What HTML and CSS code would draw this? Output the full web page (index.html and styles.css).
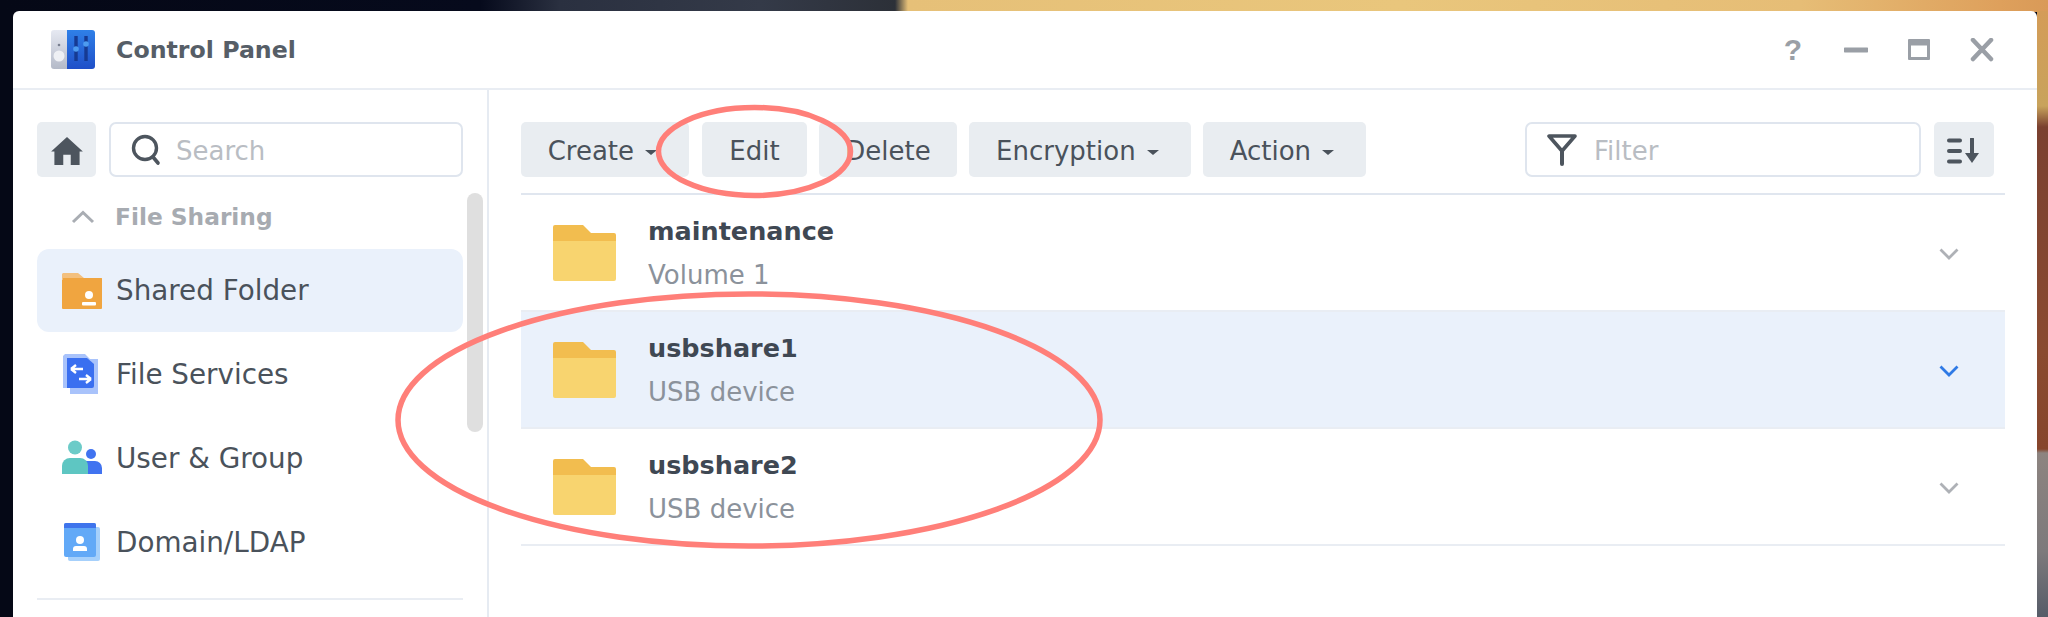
FILE: index.html
```html
<!DOCTYPE html>
<html lang="en">
<head>
    <meta charset="UTF-8">
    <title>Control Panel</title>
    <link rel="stylesheet" href="styles.css">
</head>
<body>
    <div class="window">
        <header class="titlebar">
            <svg class="app-icon" width="44" height="40" viewBox="0 0 44 40">
                <defs>
                    <linearGradient id="cpBlue" x1="0" y1="0" x2="0" y2="1"><stop offset="0" stop-color="#2f80e8"/><stop offset="1" stop-color="#1f4fc8"/></linearGradient>
                    <linearGradient id="cpGrey" x1="0" y1="0" x2="0" y2="1"><stop offset="0" stop-color="#e6e9f2"/><stop offset="1" stop-color="#b4bac8"/></linearGradient>
                </defs>
                <path d="M3 0h14v39H3a3 3 0 0 1-3-3V3a3 3 0 0 1 3-3z" fill="url(#cpGrey)"/>
                <path d="M16 0h25a3 3 0 0 1 3 3v33a3 3 0 0 1-3 3H16z" fill="url(#cpBlue)"/>
                <circle cx="8" cy="15" r="1.300" fill="#7a8090"/>
                <circle cx="8" cy="26" r="5.500" fill="#eef0f4"/>
                <path d="M25 6v25M35 6v25" stroke="#163a92" stroke-width="3.400"/>
                <circle cx="25" cy="19" r="2.800" fill="#4d9bef"/>
                <circle cx="35" cy="14" r="2.800" fill="#4d9bef"/>
            </svg>
            <h1 class="app-title">Control Panel</h1>
            <div class="win-controls">
                <span class="win-help">?</span>
                <svg width="24" height="24" viewBox="0 0 24 24"><path d="M1 12h22" stroke="#9a9fa6" stroke-width="5" stroke-linecap="round"/></svg>
                <svg width="24" height="24" viewBox="0 0 24 24"><path fill-rule="evenodd" d="M2 1h20a1 1 0 0 1 1 1v19a1 1 0 0 1-1 1H2a1 1 0 0 1-1-1V2a1 1 0 0 1 1-1zm2 6.500V19h16V7.500z" fill="#9a9fa6"/></svg>
                <svg width="24" height="24" viewBox="0 0 24 24"><path d="M3 2l18 19M21 2L3 21" stroke="#9a9fa6" stroke-width="4.500" stroke-linecap="round"/></svg>
            </div>
        </header>

        <div class="panel">
            <aside class="sidebar">
                <div class="side-top">
                    <button class="btn icon-btn home-btn">
                        <svg width="32" height="28" viewBox="0 0 34 30"><path fill-rule="evenodd" d="M17 0l17 15.500h-3.500V30h-27V15.500H0zM13 19v11h8V19z" fill="#4d555e"/></svg>
                    </button>
                    <div class="field search">
                        <svg width="30" height="32" viewBox="0 0 30 32"><circle cx="14" cy="14" r="11.500" fill="none" stroke="#4d555e" stroke-width="3.400"/><path d="M22 23l5 6" stroke="#4d555e" stroke-width="3.600" stroke-linecap="round"/></svg>
                        <span>Search</span>
                    </div>
                </div>
                <div class="side-scroll">
                    <div class="side-list">
                        <div class="side-group">
                            <svg width="24" height="14" viewBox="0 0 24 14"><path d="M2 12L12 2.500 22 12" fill="none" stroke="#a9adb3" stroke-width="3"/></svg>
                            <span>File Sharing</span>
                        </div>
                        <div class="side-item selected">
                            <svg width="40" height="36" viewBox="0 0 40 36"><path d="M1 0h15l6 5h18v8H0V1z" fill="#f3c07e"/><rect y="5" width="40" height="31" rx="1" fill="#f0a540"/><path d="M0 3h1v4H0z" fill="#f3c07e"/><circle cx="27" cy="22" r="4" fill="#fff"/><rect x="20" y="29" width="14" height="3.500" rx="1" fill="#fff"/></svg>
                            <span>Shared Folder</span>
                        </div>
                        <div class="side-item">
                            <svg width="40" height="40" viewBox="0 0 40 40"><path d="M3 0h20l5 5h8v35H8v-6H1V2z" fill="#a9c3fb"/><path d="M5 4h20l7 6v22a2 2 0 0 1-2 2H5z" fill="#3a6ff0"/><path d="M21 15H9M9 15l5-4M9 15l5 4M17 25h12M29 25l-5-4M29 25l-5 4" fill="none" stroke="#fff" stroke-width="2.400"/></svg>
                            <span>File Services</span>
                        </div>
                        <div class="side-item">
                            <svg width="40" height="36" viewBox="0 0 40 36"><circle cx="29" cy="14" r="5" fill="#4173f0"/><path d="M18 34v-6a7 7 0 0 1 7-7h8a7 7 0 0 1 7 7v6z" fill="#4173f0"/><circle cx="13" cy="7.500" r="7" fill="#6ccbc8"/><path d="M0 34v-8a8 8 0 0 1 8-8h10a8 8 0 0 1 8 8v8z" fill="#5ec6c2"/></svg>
                            <span>User &amp; Group</span>
                        </div>
                        <div class="side-item">
                            <svg width="36" height="38" viewBox="0 0 36 38"><rect x="4" y="4" width="32" height="34" rx="2" fill="#a6d0fb"/><rect width="32" height="34" rx="2" fill="#62a9f7"/><path d="M2 0h28a2 2 0 0 1 2 2v3H0V2a2 2 0 0 1 2-2z" fill="#3f74ec"/><circle cx="16" cy="17" r="4" fill="#fff"/><path d="M9 28v-2a3 3 0 0 1 3-3h8a3 3 0 0 1 3 3v2z" fill="#fff"/></svg>
                            <span>Domain/LDAP</span>
                        </div>
                    </div>
                    <div class="scrollbar"></div>
                </div>
                <div class="side-rule"></div>
            </aside>

            <main class="content">
                <div class="toolbar">
                    <button class="btn btn-menu btn-create">Create <i class="caret"></i></button>
                    <button class="btn btn-edit">Edit</button>
                    <button class="btn btn-delete">Delete</button>
                    <button class="btn btn-menu btn-encrypt">Encryption <i class="caret"></i></button>
                    <button class="btn btn-menu btn-action">Action <i class="caret"></i></button>
                    <div class="field filter">
                        <svg width="30" height="32" viewBox="0 0 30 32"><path d="M2 2h26L15 17z" fill="none" stroke="#4d555e" stroke-width="3.600" stroke-linejoin="round"/><path d="M15 16v14" stroke="#4d555e" stroke-width="4" stroke-linecap="round"/></svg>
                        <span>Filter</span>
                    </div>
                    <button class="btn icon-btn sort-btn">
                        <svg width="34" height="26" viewBox="0 0 34 26"><path d="M2 2.500h11M2 13h11M2 23.500h11" stroke="#4d555e" stroke-width="4" stroke-linecap="round"/><path d="M25 1v17" stroke="#4d555e" stroke-width="4" stroke-linecap="round"/><path d="M18 15h14l-7 10z" fill="#4d555e"/></svg>
                    </button>
                </div>

                <div class="row">
                    <svg class="folder" width="63" height="56" viewBox="0 0 63 56"><path d="M2 0h28l8 8h23a2 2 0 0 1 2 2v8H0V2a2 2 0 0 1 2-2z" fill="#f2bd4f"/><path d="M0 16h63v38a2 2 0 0 1-2 2H2a2 2 0 0 1-2-2z" fill="#f8d46f"/></svg>
                    <div class="row-text">
                        <div class="row-name">maintenance</div>
                        <div class="row-sub">Volume 1</div>
                    </div>
                    <svg class="chevron" width="20" height="12" viewBox="0 0 20 12"><path d="M1.500 1.500L10 10l8.500-8.500" fill="none" stroke="#aeb1b6" stroke-width="2.800"/></svg>
                </div>
                <div class="row selected">
                    <svg class="folder" width="63" height="56" viewBox="0 0 63 56"><path d="M2 0h28l8 8h23a2 2 0 0 1 2 2v8H0V2a2 2 0 0 1 2-2z" fill="#f2bd4f"/><path d="M0 16h63v38a2 2 0 0 1-2 2H2a2 2 0 0 1-2-2z" fill="#f8d46f"/></svg>
                    <div class="row-text">
                        <div class="row-name">usbshare1</div>
                        <div class="row-sub">USB device</div>
                    </div>
                    <svg class="chevron" width="20" height="12" viewBox="0 0 20 12"><path d="M1.500 1.500L10 10l8.500-8.500" fill="none" stroke="#2f7ae5" stroke-width="2.800"/></svg>
                </div>
                <div class="row">
                    <svg class="folder" width="63" height="56" viewBox="0 0 63 56"><path d="M2 0h28l8 8h23a2 2 0 0 1 2 2v8H0V2a2 2 0 0 1 2-2z" fill="#f2bd4f"/><path d="M0 16h63v38a2 2 0 0 1-2 2H2a2 2 0 0 1-2-2z" fill="#f8d46f"/></svg>
                    <div class="row-text">
                        <div class="row-name">usbshare2</div>
                        <div class="row-sub">USB device</div>
                    </div>
                    <svg class="chevron" width="20" height="12" viewBox="0 0 20 12"><path d="M1.500 1.500L10 10l8.500-8.500" fill="none" stroke="#aeb1b6" stroke-width="2.800"/></svg>
                </div>
            </main>
        </div>
    </div>

    <!-- hand drawn red marks over the screenshot -->
    <svg class="marks" width="2048" height="617" viewBox="0 0 2048 617">
        <ellipse cx="754.500" cy="151.500" rx="96" ry="44" fill="none" stroke="#ff7f79" stroke-width="5.500"/>
        <ellipse cx="749" cy="420" rx="351" ry="126" fill="none" stroke="#ff7f79" stroke-width="5.500"/>
    </svg>
</body>
</html>
```

FILE: styles.css
```css
* {
    box-sizing: border-box;
}
html, body {
    height: 100%;
}
body {
    margin: 0;
    overflow: hidden;
    padding: 11px 11px 0 13px;
    font-family: "DejaVu Sans", sans-serif;
    color: #4a525b;
    background-color: #050816;
    background-image:
        linear-gradient(90deg, #050816 0, #060a1c 480px, #2a3040 560px, #343a48 760px, #2c3038 895px, #e6c078 908px, #e9c67c 1400px, #e6bd76 1800px, #dea05c 2000px, #d99a58 2048px);
    background-size: 100% 12px;
    background-repeat: no-repeat;
    position: relative;
}
body::after {
    content: "";
    position: absolute;
    top: 11px;
    right: 0;
    bottom: 0;
    width: 11px;
    background: linear-gradient(180deg, #d49c58 0, #c8a35c 95px, #7a4030 116px, #8a4a30 340px, #86452c 438px, #8d8480 442px, #7d7a7c 540px, #565c68 100%);
}
.window {
    height: 100%;
    background: #fff;
    border-radius: 6px 6px 0 0;
    display: flex;
    flex-direction: column;
    position: relative;
    z-index: 1;
}
.titlebar {
    height: 79px;
    flex: none;
    display: flex;
    align-items: center;
    padding: 0 43px 0 38px;
    border-bottom: 2px solid #e9edf3;
}
.app-icon {
    margin-right: 21px;
    margin-top: 1px;
}
.app-title {
    margin: 0;
    font-size: 23.700px;
    font-weight: bold;
    color: #565e67;
}
.win-controls {
    margin-left: auto;
    display: flex;
    align-items: center;
    gap: 39px;
}
.win-help {
    font-size: 30px;
    font-weight: bold;
    color: #9a9fa6;
    width: 24px;
    text-align: center;
    font-family: "Liberation Sans", sans-serif;
}

.panel {
    flex: 1;
    display: flex;
    min-height: 0;
}
.sidebar {
    width: 476px;
    flex: none;
    border-right: 2px solid #e6ebf2;
    padding: 32px 0 0 24px;
}
.side-top {
    display: flex;
    gap: 13px;
    width: 426px;
}
.btn {
    height: 55px;
    border: none;
    border-radius: 5px;
    background: #e9edf1;
    font: inherit;
    font-size: 26px;
    color: #4a525b;
    padding: 2px 0 0;
}
.btn-menu {
    padding-right: 5px;
}
.icon-btn {
    display: flex;
    align-items: center;
    justify-content: center;
}
.home-btn {
    width: 59px;
    flex: none;
}
.field {
    height: 55px;
    border: 2px solid #dfe5ee;
    border-radius: 7px;
    background: #fff;
    display: flex;
    align-items: center;
    font-size: 26px;
    color: #b9bdc3;
}
.field span {
    padding-top: 2px;
}
.search {
    flex: 1;
    padding-left: 20px;
    gap: 15px;
}
.side-scroll {
    position: relative;
    width: 446px;
    margin-top: 16px;
}
.side-list {
    width: 426px;
}
.side-group {
    height: 56px;
    display: flex;
    align-items: center;
    font-size: 23.300px;
    font-weight: bold;
    color: #a7abb1;
    padding: 0 0 9px 34px;
    gap: 20px;
}
.side-item {
    height: 83px;
    display: flex;
    align-items: center;
    padding-left: 25px;
    font-size: 27.800px;
    gap: 14px;
    border-radius: 12px;
}
.side-item svg {
    width: 40px;
    flex: none;
}
.side-item.selected {
    background: #eaf1fb;
}
.side-item:nth-child(n+3) {
    height: 84px;
}
/* the thumb is over the list, not part of it */
.scrollbar {
    position: absolute;
    top: 0;
    right: 0;
    width: 16px;
    height: 239px;
    background: #dfdfdf;
    border-radius: 8px;
}
.side-rule {
    height: 2px;
    width: 426px;
    background: #e9edf3;
    margin-top: 14px;
}

.content {
    flex: 1;
    min-width: 0;
    padding: 32px 32px 0 32px;
}
.toolbar {
    display: flex;
    align-items: center;
    height: 73px;
    padding-bottom: 16px;
    border-bottom: 2px solid #e0e6ef;
}
.btn-create {
    width: 168px;
    margin-right: 13px;
}
.btn-edit {
    width: 105px;
    margin-right: 12px;
}
.btn-delete {
    width: 138px;
    margin-right: 12px;
}
.btn-encrypt {
    width: 222px;
    margin-right: 12px;
}
.btn-action {
    width: 163px;
}
.caret {
    display: inline-block;
    width: 0;
    height: 0;
    margin-left: 3px;
    vertical-align: middle;
    border-left: 6px solid transparent;
    border-right: 6px solid transparent;
    border-top: 5px solid #4a525b;
}
.filter {
    width: 396px;
    margin-left: auto;
    padding-left: 20px;
    gap: 17px;
}
.sort-btn {
    width: 60px;
    margin-left: 13px;
    margin-right: 11px;
    flex: none;
}
.row {
    height: 117px;
    display: flex;
    align-items: center;
    padding: 0 0 0 32px;
    border-bottom: 2px solid #e9edf3;
}
.row:nth-of-type(1) {
    height: 116px;
}
.row.selected {
    background: #eaf1fb;
}
.folder {
    flex: none;
    margin-right: 32px;
}
.row-text {
    flex: 1;
    padding-top: 1px;
}
.row-name {
    font-size: 25.500px;
    font-weight: bold;
    color: #3f4853;
    line-height: 30px;
}
.row-sub {
    font-size: 26px;
    color: #8b929b;
    line-height: 30px;
    margin-top: 14px;
}
.chevron {
    flex: none;
    margin-right: 46px;
    margin-top: 2px;
}

.marks {
    position: absolute;
    left: 0;
    top: 0;
    z-index: 2;
    pointer-events: none;
}
```
